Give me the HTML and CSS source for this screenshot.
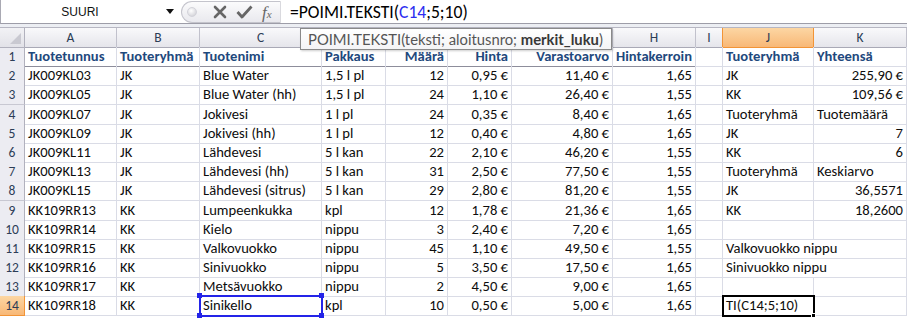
FILE: index.html
```html
<!DOCTYPE html>
<html lang="fi">
<head>
    <meta charset="UTF-8">
    <title>POIMI.TEKSTI</title>
    <link rel="stylesheet" href="styles.css">
</head>
<body>
    <div class="formula-bar">
        <div class="name-box">
            <span class="name-text">SUURI</span>
            <span class="drop-arrow"></span>
        </div>
        <div class="fx-group">
            <span class="grip"></span>
            <svg class="btn-icon" width="14" height="14" viewBox="0 0 14 14">
                <path d="M2 2 L12 12 M12 2 L2 12" stroke="#666" stroke-width="2.6" stroke-linecap="round"/>
            </svg>
            <svg class="btn-icon" width="17" height="14" viewBox="0 0 17 14">
                <path d="M1.5 7 L6 12 L15.5 1.5" stroke="#666" stroke-width="2.8" fill="none" stroke-linejoin="round"/>
            </svg>
            <span class="fx"><i>f</i><small>x</small></span>
        </div>
        <div class="formula-text">=POIMI.TEKSTI(<span class="ref-blue">C14</span>;5;10)</div>
    </div>
    <div class="bar-gap"></div>

    <div class="sheet">
        <div class="row col-heads">
            <div class="corner"><span class="corner-tri"></span></div>
            <div class="ch">A</div>
            <div class="ch">B</div>
            <div class="ch">C</div>
            <div class="ch">D</div>
            <div class="ch">E</div>
            <div class="ch">F</div>
            <div class="ch">G</div>
            <div class="ch">H</div>
            <div class="ch">I</div>
            <div class="ch ch-active">J</div>
            <div class="ch">K</div>
        </div>

        <div class="row head-row">
            <div class="rh">1</div>
            <div class="c h">Tuotetunnus</div>
            <div class="c h">Tuoteryhmä</div>
            <div class="c h">Tuotenimi</div>
            <div class="c h">Pakkaus</div>
            <div class="c h n">Määrä</div>
            <div class="c h n">Hinta</div>
            <div class="c h n">Varastoarvo</div>
            <div class="c h n">Hintakerroin</div>
            <div class="c"></div>
            <div class="c h side">Tuoteryhmä</div>
            <div class="c h side">Yhteensä</div>
        </div>

        <div class="row">
            <div class="rh">2</div>
            <div class="c">JK009KL03</div><div class="c">JK</div><div class="c">Blue Water</div><div class="c">1,5 l pl</div>
            <div class="c n">12</div><div class="c n">0,95 €</div><div class="c n">11,40 €</div><div class="c n">1,65</div>
            <div class="c"></div><div class="c">JK</div><div class="c n">255,90 €</div>
        </div>
        <div class="row">
            <div class="rh">3</div>
            <div class="c">JK009KL05</div><div class="c">JK</div><div class="c">Blue Water (hh)</div><div class="c">1,5 l pl</div>
            <div class="c n">24</div><div class="c n">1,10 €</div><div class="c n">26,40 €</div><div class="c n">1,55</div>
            <div class="c"></div><div class="c">KK</div><div class="c n">109,56 €</div>
        </div>
        <div class="row">
            <div class="rh">4</div>
            <div class="c">JK009KL07</div><div class="c">JK</div><div class="c">Jokivesi</div><div class="c">1 l pl</div>
            <div class="c n">24</div><div class="c n">0,35 €</div><div class="c n">8,40 €</div><div class="c n">1,65</div>
            <div class="c"></div><div class="c">Tuoteryhmä</div><div class="c">Tuotemäärä</div>
        </div>
        <div class="row">
            <div class="rh">5</div>
            <div class="c">JK009KL09</div><div class="c">JK</div><div class="c">Jokivesi (hh)</div><div class="c">1 l pl</div>
            <div class="c n">12</div><div class="c n">0,40 €</div><div class="c n">4,80 €</div><div class="c n">1,65</div>
            <div class="c"></div><div class="c">JK</div><div class="c n">7</div>
        </div>
        <div class="row">
            <div class="rh">6</div>
            <div class="c">JK009KL11</div><div class="c">JK</div><div class="c">Lähdevesi</div><div class="c">5 l kan</div>
            <div class="c n">22</div><div class="c n">2,10 €</div><div class="c n">46,20 €</div><div class="c n">1,55</div>
            <div class="c"></div><div class="c">KK</div><div class="c n">6</div>
        </div>
        <div class="row">
            <div class="rh">7</div>
            <div class="c">JK009KL13</div><div class="c">JK</div><div class="c">Lähdevesi (hh)</div><div class="c">5 l kan</div>
            <div class="c n">31</div><div class="c n">2,50 €</div><div class="c n">77,50 €</div><div class="c n">1,55</div>
            <div class="c"></div><div class="c">Tuoteryhmä</div><div class="c">Keskiarvo</div>
        </div>
        <div class="row">
            <div class="rh">8</div>
            <div class="c">JK009KL15</div><div class="c">JK</div><div class="c">Lähdevesi (sitrus)</div><div class="c">5 l kan</div>
            <div class="c n">29</div><div class="c n">2,80 €</div><div class="c n">81,20 €</div><div class="c n">1,55</div>
            <div class="c"></div><div class="c">JK</div><div class="c n">36,5571</div>
        </div>
        <div class="row">
            <div class="rh">9</div>
            <div class="c">KK109RR13</div><div class="c">KK</div><div class="c">Lumpeenkukka</div><div class="c">kpl</div>
            <div class="c n">12</div><div class="c n">1,78 €</div><div class="c n">21,36 €</div><div class="c n">1,65</div>
            <div class="c"></div><div class="c">KK</div><div class="c n">18,2600</div>
        </div>
        <div class="row">
            <div class="rh">10</div>
            <div class="c">KK109RR14</div><div class="c">KK</div><div class="c">Kielo</div><div class="c">nippu</div>
            <div class="c n">3</div><div class="c n">2,40 €</div><div class="c n">7,20 €</div><div class="c n">1,65</div>
            <div class="c"></div><div class="c"></div><div class="c"></div>
        </div>
        <div class="row">
            <div class="rh">11</div>
            <div class="c">KK109RR15</div><div class="c">KK</div><div class="c">Valkovuokko</div><div class="c">nippu</div>
            <div class="c n">45</div><div class="c n">1,10 €</div><div class="c n">49,50 €</div><div class="c n">1,55</div>
            <div class="c"></div><div class="c span2">Valkovuokko nippu</div>
        </div>
        <div class="row">
            <div class="rh">12</div>
            <div class="c">KK109RR16</div><div class="c">KK</div><div class="c">Sinivuokko</div><div class="c">nippu</div>
            <div class="c n">5</div><div class="c n">3,50 €</div><div class="c n">17,50 €</div><div class="c n">1,65</div>
            <div class="c"></div><div class="c span2">Sinivuokko nippu</div>
        </div>
        <div class="row">
            <div class="rh">13</div>
            <div class="c">KK109RR17</div><div class="c">KK</div><div class="c">Metsävuokko</div><div class="c">nippu</div>
            <div class="c n">2</div><div class="c n">4,50 €</div><div class="c n">9,00 €</div><div class="c n">1,65</div>
            <div class="c"></div><div class="c"></div><div class="c"></div>
        </div>
        <div class="row">
            <div class="rh rh-active">14</div>
            <div class="c">KK109RR18</div><div class="c">KK</div>
            <div class="c ref-cell">Sinikello
                <span class="handle tl"></span><span class="handle tr"></span>
                <span class="handle bl"></span><span class="handle br"></span>
            </div>
            <div class="c">kpl</div>
            <div class="c n">10</div><div class="c n">0,50 €</div><div class="c n">5,00 €</div><div class="c n">1,65</div>
            <div class="c"></div>
            <div class="c edit-cell">TI(C14;5;10)<span class="fill-handle"></span></div>
            <div class="c"></div>
        </div>

        <div class="tooltip">POIMI.TEKSTI(teksti; aloitusnro; <b>merkit_luku</b>)</div>
    </div>
</body>
</html>
```

FILE: styles.css
```css
* {
    margin: 0;
    padding: 0;
    box-sizing: border-box;
}

body {
    width: 907px;
    height: 318px;
    overflow: hidden;
    background: #fff;
    font-family: Calibri, Carlito, Lato, sans-serif;
    color: #111;
}

/* formula bar */
.formula-bar {
    display: flex;
    height: 24px;
    border-left: 1px solid #a9a9b3;
    border-bottom: 1px solid #9d9da8;
}

.name-box {
    width: 180px;
    display: flex;
    align-items: center;
}

.name-text {
    width: 158px;
    text-align: center;
    font-family: "Liberation Sans", Arial, sans-serif;
    font-size: 12px;
    color: #111;
}

.drop-arrow {
    margin-left: 7px;
    width: 0;
    height: 0;
    border-left: 4px solid transparent;
    border-right: 4px solid transparent;
    border-top: 5px solid #111;
}

.fx-group {
    width: 100px;
    margin: 1px 0 0;
    display: flex;
    align-items: center;
    gap: 9px;
    padding-left: 5px;
    border: 1px solid #c4c4cc;
    border-right: 1px solid #d9d9de;
    border-radius: 12px 0 0 12px;
    background: linear-gradient(#fbfbfc, #e9e9ee);
}

.grip {
    width: 10px;
    height: 10px;
    border-radius: 50%;
    background: radial-gradient(circle at 40% 35%, #fff, #c9c9d0);
    border: 1px solid #d3d3da;
    margin-right: 7px;
}

.fx {
    font-family: "Liberation Serif", serif;
    color: #666;
    font-size: 17px;
    line-height: 1;
}

.fx small {
    font-size: 11px;
    font-style: italic;
}

.formula-text {
    padding-left: 9px;
    font-size: 17.6px;
    line-height: 24px;
    color: #000;
}

.ref-blue {
    color: #2d2df0;
}

.bar-gap {
    height: 3px;
    background: #eceef3;
}

/* sheet */
.sheet {
    position: relative;
    --cols: 25px 92px 83px 122px 64px 62px 64px 101px 83px 27px 91px 93px;
}

.row {
    display: grid;
    grid-template-columns: var(--cols);
    height: 19.2px;
}

.col-heads {
    height: 20px;
    border-top: 1px solid #b6b6c2;
}

.corner {
    position: relative;
    background: linear-gradient(#f2f2f5, #e2e2e8);
    border-right: 1px solid #b1b1bd;
    border-bottom: 1px solid #b1b1bd;
}

.corner-tri {
    position: absolute;
    right: 3px;
    bottom: 3px;
    width: 0;
    height: 0;
    border-left: 11px solid transparent;
    border-bottom: 11px solid #c9c9d1;
}

.ch {
    background: linear-gradient(#f9f9fb, #e5e5eb);
    border-right: 1px solid #c1c1cc;
    border-bottom: 1px solid #a9a9b6;
    text-align: center;
    font-size: 13.5px;
    line-height: 19px;
    color: #2c3d57;
}

.ch-active {
    background: linear-gradient(#fcd6a3, #f8b877);
    border-right: 1px solid #f29436;
    border-bottom: 1px solid #f29436;
    border-left: 1px solid #f29436;
    margin-left: -1px;
}

.rh {
    background: #ececf2;
    border-right: 1px solid #b1b1bd;
    border-bottom: 1px solid #c8c8d2;
    text-align: center;
    font-size: 13.5px;
    line-height: 19px;
    color: #2c3d57;
}

.rh-active {
    background: linear-gradient(#fcd6a3, #f8b877);
    border-right-color: #f29436;
    border-bottom-color: #f29436;
}

.c {
    border-right: 1px solid #dadce6;
    border-bottom: 1px solid #dadce6;
    padding: 0 3px;
    white-space: nowrap;
    overflow: hidden;
    font-size: 14.6px;
    line-height: 18px;
    color: #0d0d0d;
}

.n {
    text-align: right;
}

.h {
    font-weight: bold;
    color: #1f497d;
}

.head-row .c {
    border-bottom-color: #8d8d9b;
}

.head-row .c.side,
.head-row .c:nth-child(10) {
    border-bottom-color: #dadce6;
}

.span2 {
    grid-column: span 2;
}

.ref-cell {
    position: relative;
    overflow: visible;
    outline: 2px solid #2424e8;
    outline-offset: -1px;
}

.handle {
    position: absolute;
    width: 5px;
    height: 5px;
    background: #2424e8;
}

.handle.tl { left: -3px; top: -3px; }
.handle.tr { right: -3px; top: -3px; }
.handle.bl { left: -3px; bottom: -3px; }
.handle.br { right: -3px; bottom: -3px; }

.edit-cell {
    position: relative;
    overflow: visible;
    outline: 2px solid #000;
    outline-offset: -1px;
}

.fill-handle {
    position: absolute;
    right: -3px;
    bottom: -3px;
    width: 5px;
    height: 5px;
    background: #000;
    border: 1px solid #fff;
}

/* function tooltip */
.tooltip {
    position: absolute;
    left: 300px;
    top: 1px;
    width: 312px;
    height: 22px;
    padding-left: 7px;
    background: linear-gradient(#ffffff, #f4f4f6);
    border: 1px solid #8a8a8a;
    box-shadow: 1px 1px 2px rgba(0, 0, 0, 0.2);
    font-family: Lato, sans-serif;
    font-size: 14.8px;
    line-height: 20px;
    color: #555;
    white-space: nowrap;
}

.tooltip b {
    color: #383838;
}
```
